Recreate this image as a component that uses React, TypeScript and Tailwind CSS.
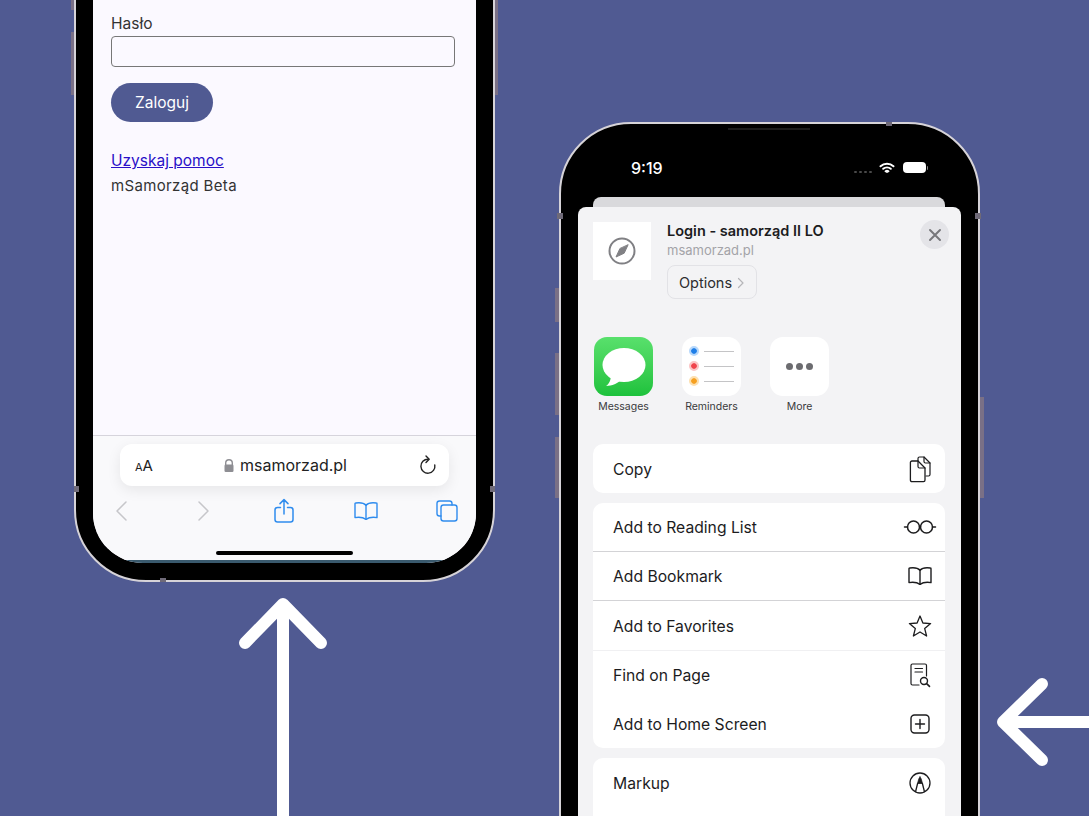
import React from "react";

const font = { fontFamily: "Inter, 'Noto Sans', 'Liberation Sans', sans-serif" };

const Svg = ({ className, children, w = 24, h = 24 }: { className?: string; children: React.ReactNode; w?: number; h?: number }) => (
  <svg width={w} height={h} viewBox={`0 0 ${w} ${h}`} fill="none" stroke="currentColor" strokeLinecap="round" strokeLinejoin="round" className={`shrink-0 ${className ?? ""}`}>
    {children}
  </svg>
);

const BookIcon = ({ className }: { className?: string }) => (
  <Svg w={26} h={20} className={className}>
    <path d="M13 4.2C11 2 7 1.4 2.6 2 2.2 2 2 2.3 2 2.7V16.6C6 16 10 16.2 13 18.4 16 16.2 20 16 24 16.6V2.7C24 2.3 23.8 2 23.4 2 19 1.4 15 2 13 4.2Z" strokeWidth="1.4" />
    <path d="M13 4.2V18.4" strokeWidth="1.4" />
  </Svg>
);

const ShareIcon = () => (
  <Svg w={22} h={26} className="text-[#2f8cee]">
    <path d="M11 16V2M7 5.6 11 1.6 15 5.6" strokeWidth="1.5" />
    <path d="M7.5 9.5H4.5C3 9.5 2 10.5 2 12V21.5C2 23 3 24 4.5 24H17.5C19 24 20 23 20 21.5V12C20 10.5 19 9.5 17.5 9.5H14.5" strokeWidth="1.5" />
  </Svg>
);

const TabsIcon = () => (
  <Svg w={24} h={24} className="text-[#2f8cee]">
    <path d="M6 17H4.5C3 17 2 16 2 14.5V4.5C2 3 3 2 4.5 2H14.5C16 2 17 3 17 4.5V6" strokeWidth="1.4" />
    <rect x="6" y="6" width="16" height="16" rx="2.5" strokeWidth="1.4" />
  </Svg>
);

const Chevron = ({ dir }: { dir: "left" | "right" }) => (
  <Svg w={14} h={22} className="text-[#c6c6ca]">
    <path d={dir === "left" ? "M12 2 3 11 12 20" : "M2 2 11 11 2 20"} strokeWidth="1.5" />
  </Svg>
);

const CopyIcon = () => (
  <Svg w={24} h={28}>
    <path d="M10 5.5V3.5C10 2.5 10.7 2 11.5 2H16L22 8V19.5C22 20.5 21.3 21 20.5 21H18" strokeWidth="1.2" />
    <path d="M16 2V6.5C16 7.5 16.5 8 17.5 8H22" strokeWidth="1.2" />
    <path d="M4 6H10L17 13V25C17 26 16.3 26.6 15.5 26.6H4C3 26.6 2.4 26 2.4 25V7.6C2.4 6.6 3 6 4 6Z" strokeWidth="1.3" fill="white" />
    <path d="M10 6V11.5C10 12.5 10.5 13 11.5 13H17" strokeWidth="1.2" />
  </Svg>
);

const GlassesIcon = () => (
  <Svg w={34} h={16}>
    <circle cx="10.5" cy="8" r="6" strokeWidth="1.5" />
    <circle cx="23.5" cy="8" r="6" strokeWidth="1.5" />
    <path d="M16.5 7.4C16.5 7 17.5 7 17.5 7.4M4.5 8H1.5M29.5 8H32.5" strokeWidth="1.5" />
  </Svg>
);

const StarIcon = () => (
  <Svg w={24} h={24}>
    <path d="M12 2 14.9 9 22.6 9.6 16.7 14.6 18.6 22 12 18 5.4 22 7.3 14.6 1.4 9.6 9.1 9Z" strokeWidth="1.3" />
  </Svg>
);

const FindIcon = () => (
  <Svg w={22} h={26}>
    <path d="M10 23H3.5C2.5 23 2 22.5 2 21.5V3.5C2 2.5 2.5 2 3.5 2H16C17 2 17.5 2.5 17.5 3.5V14" strokeWidth="1.2" />
    <path d="M6 6.5H13.5M6 10H13.5" strokeWidth="1.2" />
    <circle cx="15" cy="19" r="3.5" strokeWidth="1.4" />
    <path d="M17.6 21.6 20.5 24.4" strokeWidth="1.6" />
  </Svg>
);

const PlusIcon = () => (
  <Svg w={22} h={22}>
    <rect x="2" y="2" width="18" height="18" rx="3.5" strokeWidth="1.4" />
    <path d="M11 6.5V15.5M6.5 11H15.5" strokeWidth="1.4" />
  </Svg>
);

const MarkupIcon = () => (
  <Svg w={24} h={24}>
    <circle cx="12" cy="12" r="10" strokeWidth="1.3" />
    <path d="M12 6C11 6.5 10.4 9 9.6 12.5H14.4C13.6 9 13 6.5 12 6Z" fill="currentColor" strokeWidth="0.8" />
    <path d="M9.6 12.5 7.6 20.5M14.4 12.5 16.4 20.5" strokeWidth="1.3" />
  </Svg>
);

const Row = ({ label, icon, divider }: { label: string; icon: React.ReactNode; divider?: boolean }) => (
  <div className={`flex h-[49px] items-center justify-between pl-5 pr-[13px] text-[15.7px] text-[#1c1c1e] ${divider ? "border-b border-[#d3d3d6]" : ""}`}>
    <span className="pt-[2px]">{label}</span>
    <span className="flex w-[24px] items-center justify-center">{icon}</span>
  </div>
);

const LeftPhone = () => (
  <div className="absolute left-[74px] top-[-326px] h-[908px] w-[421px]">
    <div className="absolute left-[-3px] top-[358px] h-[63px] w-[3px] bg-[#7a7086]" />
    <div className="absolute left-[-3px] top-[300px] h-[36px] w-[3px] bg-[#7a7086]" />
    <div className="absolute right-[-3px] top-[300px] h-[121px] w-[3px] bg-[#7a7086]" />
    <div className="h-full w-full rounded-[72px] border-2 border-[#d6d3d8] bg-black p-[17px]">
      <div className="flex h-full flex-col overflow-hidden rounded-[50px] bg-[#fbf9ff]">
        <div className="flex-1 pl-[18px] pr-[21px] pt-[321px] text-[#333]">
          <div className="text-[15.5px] leading-5">Hasło</div>
          <div className="mt-[2px] h-[31px] rounded-[4px] border border-[#777]" />
          <button className="mt-[16px] block h-[39px] w-[102px] rounded-full bg-[#505a92] text-[15.5px] text-white">Zaloguj</button>
          <a className="mt-[29px] block text-[15.5px] leading-5 text-[#2a10c8] underline">Uzyskaj pomoc</a>
          <div className="mt-[5px] text-[15px] leading-5 tracking-[0.35px]">mSamorząd Beta</div>
        </div>
        <div className="h-[125px] border-t border-[#d6d4dc] bg-[#f9f9fb]">
          <div className="mx-[27px] mt-[8px] flex h-[42px] items-center justify-between rounded-xl bg-white pl-[15px] pr-[11px] shadow-[0_4px_14px_rgba(0,0,0,0.08)]">
            <span className="w-[18px] whitespace-nowrap text-[#222]"><span className="text-[11px]">A</span><span className="text-[15px]">A</span></span>
            <span className="flex items-center gap-[6px] text-[16px] text-[#222]">
              <svg width="10" height="13" viewBox="0 0 10 13" fill="#8e8e93"><path d="M1 6V4a4 4 0 0 1 8 0v2h-1.4V4a2.6 2.6 0 0 0-5.2 0v2Z" /><rect x="0.5" y="5.5" width="9" height="7.5" rx="1.2" /></svg>
              msamorzad.pl
            </span>
            <Svg w={20} h={20} className="text-[#222]">
              <path d="M10 4.2A7 7 0 1 0 16.8 10" strokeWidth="1.4" />
              <path d="M8 1 11.2 4.2 8 7.4" strokeWidth="1.4" />
            </Svg>
          </div>
          <div className="mt-[11px] flex h-[28px] items-center pl-[21px]">
            <span className="w-[83px]"><Chevron dir="left" /></span>
            <span className="w-[76px]"><Chevron dir="right" /></span>
            <span className="w-[80px]"><ShareIcon /></span>
            <span className="w-[82px]"><BookIcon className="text-[#2f8cee]" /></span>
            <TabsIcon />
          </div>
          <div className="mx-auto mt-[26px] h-[4px] w-[137px] rounded-full bg-black" />
        </div>
        <div className="mx-[32px] h-[3px] bg-[#3a5a6e]" />
      </div>
    </div>
    <div className="absolute left-0 top-[812px] h-[6px] w-[5px] bg-[#6f6a78]" />
    <div className="absolute right-0 top-[812px] h-[6px] w-[5px] bg-[#6f6a78]" />
    <div className="absolute left-[86px] top-[904px] h-[4px] w-[6px] bg-[#6f6a78]" />
  </div>
);

const RightPhone = () => (
  <div className="absolute left-[559px] top-[122px] h-[908px] w-[421px]">
    <div className="absolute left-[-4px] top-[166px] h-[34px] w-[4px] bg-[#7a7086]" />
    <div className="absolute left-[-4px] top-[231px] h-[62px] w-[4px] bg-[#7a7086]" />
    <div className="absolute left-[-4px] top-[315px] h-[61px] w-[4px] bg-[#7a7086]" />
    <div className="absolute right-[-4px] top-[275px] h-[101px] w-[4px] bg-[#7a7086]" />
    <div className="h-full w-full rounded-[72px] border-2 border-[#d6d3d8] bg-black p-[17px]">
      <div className="relative flex h-full flex-col overflow-hidden rounded-[50px] bg-black">
        <div className="flex h-[56px] shrink-0 items-center pb-[3px] pl-[53px] pr-[33px] text-white">
          <span className="text-[16px] font-medium">9:19</span>
          <span className="ml-auto flex items-center gap-[2px] pt-[8px]">
            <span className="h-[2px] w-[3px] rounded-full bg-[#4a4a4a]" />
            <span className="h-[2px] w-[3px] rounded-full bg-[#4a4a4a]" />
            <span className="h-[2px] w-[3px] rounded-full bg-[#4a4a4a]" />
            <span className="h-[2px] w-[3px] rounded-full bg-[#4a4a4a]" />
          </span>
          <svg width="16" height="12" viewBox="0 0 16 12" className="ml-[7px]" fill="none" stroke="white" strokeWidth="2" strokeLinecap="round">
            <path d="M1.5 4.2C5.2 .8 10.8 .8 14.5 4.2" />
            <path d="M4.2 6.8C6.4 4.9 9.6 4.9 11.8 6.8" />
            <circle cx="8" cy="10" r="1" fill="white" stroke="none" />
            <path d="M6.6 9.3C7.4 8.7 8.6 8.7 9.4 9.3" />
          </svg>
          <span className="ml-[8px] h-[11px] w-[23px] rounded-[4px] bg-white" />
          <span className="ml-[1px] h-[4px] w-[1.5px] rounded-r bg-[#888]" />
        </div>
        <div className="ml-[15px] mr-[16px] h-[10px] shrink-0 rounded-t-lg bg-[#d9d9dc]" />
        <div className="flex-1 rounded-t-lg bg-[#f3f3f5] pl-[15px] pr-[16px] pt-[15px]">
          <div className="relative flex h-[78px] items-start">
            <div className="flex h-[58px] w-[58px] items-center justify-center bg-white">
              <Svg w={30} h={30} className="text-[#808084]">
                <circle cx="15" cy="15" r="12.5" strokeWidth="2" />
                <path d="M21 9 17.2 17.2 9 21 12.8 12.8Z" fill="currentColor" strokeWidth="1" />
              </Svg>
            </div>
            <div className="ml-[16px]">
              <div className="text-[14.5px] font-semibold leading-[18px] text-[#1c1c1e]">Login - samorząd II LO</div>
              <div className="mt-[1px] text-[13px] leading-[18px] text-[#a3a3a8]">msamorzad.pl</div>
              <div className="mt-[6px] flex h-[34px] w-[90px] items-center justify-center gap-[5px] rounded-[8px] border border-[#e2e2e6] pt-[1px] text-[14.5px] text-[#2c2c2e]">
                Options
                <Svg w={8} h={12} className="text-[#b5b5b9]"><path d="M1.5 1.5 6 6 1.5 10.5" strokeWidth="1.2" /></Svg>
              </div>
            </div>
            <div className="absolute right-[-4px] top-[-2px] flex h-[29px] w-[29px] items-center justify-center rounded-full bg-[#e4e4e8]">
              <Svg w={14} h={14} className="text-[#77777b]"><path d="M2 2 12 12M12 2 2 12" strokeWidth="2" /></Svg>
            </div>
          </div>
          <div className="ml-[1px] mt-[37px] flex h-[107px] items-start gap-[29px]">
            <div className="flex w-[59px] flex-col items-center">
              <div className="flex h-[59px] w-[59px] items-center justify-center rounded-[13px] bg-gradient-to-b from-[#58e06c] to-[#1cc23c]">
                <svg width="50" height="44" viewBox="0 0 50 44" fill="white">
                  <ellipse cx="25" cy="20" rx="21.5" ry="17" />
                  <path d="M12 30C12 35 10 39 7 41 13 41 19 38 22 35Z" />
                </svg>
              </div>
              <span className="mt-[3px] whitespace-nowrap text-[10.5px] text-[#3a3a3c]">Messages</span>
            </div>
            <div className="flex w-[59px] flex-col items-center">
              <div className="flex h-[59px] w-[59px] flex-col justify-center gap-[5px] rounded-[13px] bg-white pb-[1px] pl-[7px] pr-[7px]">
                <div className="flex items-center gap-[5px]"><span className="h-[10px] w-[10px] rounded-full border-2 border-[#b7d8fb] bg-[#1f7fe8] bg-clip-padding" /><span className="h-px flex-1 bg-[#c4c4c6]" /></div>
                <div className="flex items-center gap-[5px]"><span className="h-[10px] w-[10px] rounded-full border-2 border-[#fbc4c4] bg-[#f0444c] bg-clip-padding" /><span className="h-px flex-1 bg-[#c4c4c6]" /></div>
                <div className="flex items-center gap-[5px]"><span className="h-[10px] w-[10px] rounded-full border-2 border-[#fde0b0] bg-[#f6a020] bg-clip-padding" /><span className="h-px flex-1 bg-[#c4c4c6]" /></div>
              </div>
              <span className="mt-[3px] whitespace-nowrap text-[10.5px] text-[#3a3a3c]">Reminders</span>
            </div>
            <div className="flex w-[59px] flex-col items-center">
              <div className="flex h-[59px] w-[59px] items-center justify-center gap-[3px] rounded-[13px] bg-white">
                <span className="h-[7px] w-[7px] rounded-full bg-[#6c6c70]" />
                <span className="h-[7px] w-[7px] rounded-full bg-[#6c6c70]" />
                <span className="h-[7px] w-[7px] rounded-full bg-[#6c6c70]" />
              </div>
              <span className="mt-[3px] whitespace-nowrap text-[10.5px] text-[#3a3a3c]">More</span>
            </div>
          </div>
          <div className="flex flex-col gap-[10px] text-black">
            <div className="rounded-[10px] bg-white">
              <Row label="Copy" icon={<CopyIcon />} />
            </div>
            <div className="rounded-[10px] bg-white">
              <Row label="Add to Reading List" icon={<GlassesIcon />} divider />
              <Row label="Add Bookmark" icon={<BookIcon />} divider />
              <Row label="Add to Favorites" icon={<StarIcon />} />
              <div className="h-px bg-[#f0f0f2]" />
              <div className="-mt-px"><Row label="Find on Page" icon={<FindIcon />} /></div>
              <Row label="Add to Home Screen" icon={<PlusIcon />} />
            </div>
            <div className="rounded-[10px] bg-white">
              <Row label="Markup" icon={<MarkupIcon />} />
              <div className="h-[60px]" />
            </div>
          </div>
        </div>
      </div>
    </div>
    <div className="absolute left-[169px] top-[6px] h-[2px] w-[82px] bg-[#1c1c1c]" />
    <div className="absolute right-[88px] top-0 h-[4px] w-[6px] bg-[#6f6a78]" />
    <div className="absolute left-[-2px] top-[91px] h-[6px] w-[6px] bg-[#6f6a78]" />
    <div className="absolute right-[-1px] top-[91px] h-[6px] w-[6px] bg-[#6f6a78]" />
  </div>
);

export default function App() {
  return (
    <div style={font} className="relative h-[816px] w-[1089px] overflow-hidden bg-[#505a92]">
      <LeftPhone />
      <RightPhone />
      <svg width="90" height="218" viewBox="0 0 90 218" fill="none" stroke="white" strokeWidth="12" strokeLinecap="round" strokeLinejoin="round" className="absolute left-[238px] top-[598px]">
        <path d="M7 45 45 6 83 45" />
        <path d="M45 10V240" strokeLinecap="butt" />
      </svg>
      <svg width="92" height="92" viewBox="0 0 92 92" fill="none" stroke="white" strokeWidth="12" strokeLinecap="round" strokeLinejoin="round" className="absolute left-[997px] top-[676px]">
        <path d="M45 8 6 46 45 84" />
        <path d="M10 46H100" strokeLinecap="butt" />
      </svg>
    </div>
  );
}
